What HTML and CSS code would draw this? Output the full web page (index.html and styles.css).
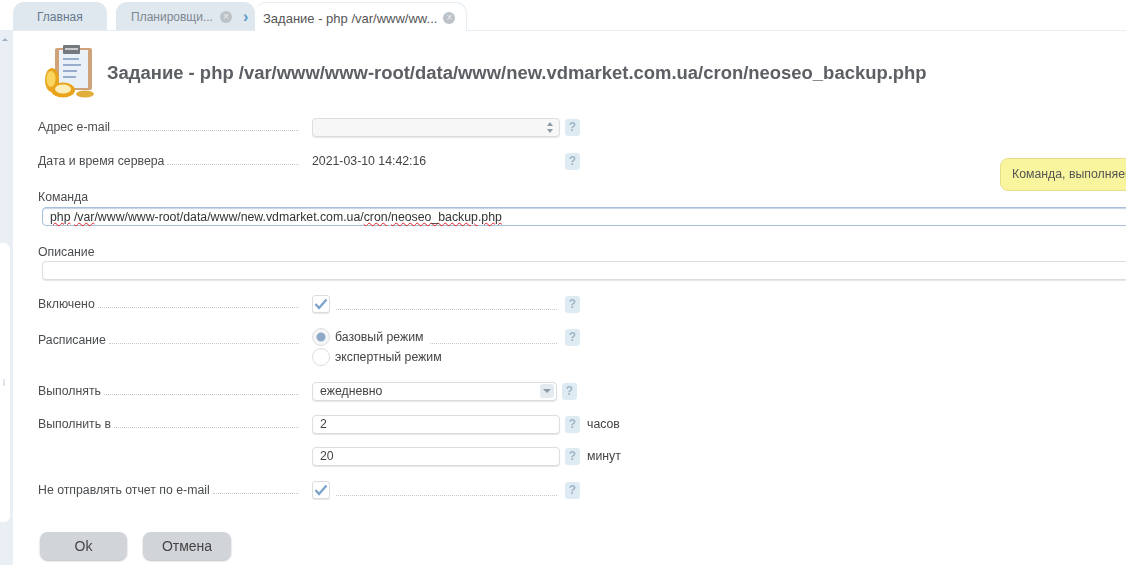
FILE: index.html
```html
<!DOCTYPE html>
<html lang="ru">
<head>
    <meta charset="UTF-8">
    <title>Задание</title>
    <link rel="stylesheet" href="styles.css">
</head>
<body>
    <div class="page">
        <div class="tabs">
            <div class="tab tab-home">Главная</div>
            <div class="tab tab-sched">
                <span>Планировщи...</span>
                <span class="tab-close">×</span>
                <span class="tab-arrow">›</span>
            </div>
            <div class="tab tab-active">
                <span>Задание - php /var/www/ww...</span>
                <span class="tab-close">×</span>
            </div>
        </div>

        <div class="main">
            <div class="side">
                <div class="side-arrow"></div>
                <div class="side-thumb"><span class="side-grip"></span></div>
            </div>

            <div class="content">
                <div class="head">
                    <svg class="head-icon" width="56" height="56" viewBox="0 0 56 56">
                        <rect x="14" y="3" width="37" height="42" rx="2" fill="#cfa27a"/>
                        <rect x="18" y="5" width="29" height="38" fill="#e9f0f8"/>
                        <rect x="22" y="0" width="17" height="9" rx="1" fill="#75787d"/>
                        <rect x="24" y="3" width="13" height="2" fill="#c9ccd0"/>
                        <path d="M22 14h16M22 20h18M22 26h14M22 32h13" stroke="#7f95bd" stroke-width="1.5"/>
                        <ellipse cx="11" cy="35" rx="7" ry="12" fill="#e8a51b"/>
                        <ellipse cx="10" cy="34" rx="4.5" ry="8" fill="#f9d560"/>
                        <ellipse cx="22" cy="45" rx="12" ry="7.5" fill="#e9a41c"/>
                        <ellipse cx="22" cy="44" rx="8" ry="4.5" fill="#fbeeb8"/>
                        <ellipse cx="44" cy="49" rx="9" ry="3.5" fill="#e3ad3a"/>
                    </svg>
                    <h1 class="title">Задание - php /var/www/www-root/data/www/new.vdmarket.com.ua/cron/neoseo_backup.php</h1>
                </div>

                <div class="row row-email">
                    <div class="label"><span>Адрес e-mail</span></div>
                    <div class="field field-gray field-spin">
                        <span class="spin"><i class="spin-up"></i><i class="spin-down"></i></span>
                    </div>
                    <span class="help">?</span>
                </div>

                <div class="row row-date">
                    <div class="label"><span>Дата и время сервера</span></div>
                    <div class="value">2021-03-10 14:42:16</div>
                    <span class="help">?</span>
                </div>

                <div class="wide wide-cmd">
                    <div class="wide-label">Команда</div>
                    <div class="field field-wide field-focus">
                        <span><span class="typo">php</span> <span class="typo">/var</span>/www/www-root/data/www/new.vdmarket.com.ua/<span class="typo">cron</span>/<span class="typo">neoseo_backup</span>.<span class="typo">php</span></span>
                    </div>
                </div>

                <div class="wide wide-desc">
                    <div class="wide-label">Описание</div>
                    <div class="field field-wide"></div>
                </div>

                <div class="row row-on">
                    <div class="label"><span>Включено</span></div>
                    <div class="control">
                        <span class="check">
                            <svg width="14" height="12" viewBox="0 0 14 12"><path d="M1.5 6l3.5 4 7.5-8.5" fill="none" stroke="#7da4cc" stroke-width="2.4"/></svg>
                        </span>
                        <span class="dots"></span>
                    </div>
                    <span class="help">?</span>
                </div>

                <div class="row row-plan">
                    <div class="label"><span>Расписание</span></div>
                    <div class="control control-radios">
                        <div class="radio-line">
                            <span class="radio radio-on"></span>
                            <span class="radio-text">базовый режим</span>
                            <span class="dots"></span>
                        </div>
                        <div class="radio-line">
                            <span class="radio"></span>
                            <span class="radio-text">экспертный режим</span>
                        </div>
                    </div>
                    <span class="help">?</span>
                </div>

                <div class="row row-run">
                    <div class="label"><span>Выполнять</span></div>
                    <div class="field field-select">
                        <span>ежедневно</span>
                        <span class="select-btn"></span>
                    </div>
                    <span class="help">?</span>
                </div>

                <div class="row row-at">
                    <div class="label"><span>Выполнить в</span></div>
                    <div class="field">2</div>
                    <span class="help">?</span>
                    <span class="unit">часов</span>
                </div>

                <div class="row row-min">
                    <div class="label label-empty"></div>
                    <div class="field">20</div>
                    <span class="help">?</span>
                    <span class="unit">минут</span>
                </div>

                <div class="row row-mail">
                    <div class="label"><span>Не отправлять отчет по e-mail</span></div>
                    <div class="control">
                        <span class="check">
                            <svg width="14" height="12" viewBox="0 0 14 12"><path d="M1.5 6l3.5 4 7.5-8.5" fill="none" stroke="#7da4cc" stroke-width="2.4"/></svg>
                        </span>
                        <span class="dots"></span>
                    </div>
                    <span class="help">?</span>
                </div>

                <div class="buttons">
                    <button class="btn btn-ok">Ok</button>
                    <button class="btn btn-cancel">Отмена</button>
                </div>
            </div>
        </div>

        <div class="hint">Команда, выполняемая планировщиком</div>
    </div>
</body>
</html>
```

FILE: styles.css
```css
* {
    box-sizing: border-box;
}

html, body {
    margin: 0;
    height: 565px;
    overflow: hidden;
    background: #fff;
}

body {
    font-family: "Liberation Sans", Arial, sans-serif;
    font-size: 12.3px;
    color: #444;
}

.page {
    position: relative;
    width: 1126px;
    height: 565px;
    overflow: hidden;
    filter: blur(0.7px);
}

/* tabs */
.tabs {
    display: flex;
    align-items: flex-end;
    height: 31px;
    padding-left: 13px;
    border-bottom: 1px solid #e6edf3;
}

.tab {
    display: flex;
    align-items: center;
    height: 28px;
    padding-top: 2px;
    border-radius: 11px 11px 0 0;
    background: #e0e8ef;
    color: #7d8790;
    font-size: 12px;
}

.tab-home {
    width: 94px;
    padding-left: 24px;
    margin-right: 9px;
    color: #66788c;
}

.tab-sched {
    width: 139px;
    padding-left: 15px;
}

.tab-active {
    width: 212px;
    height: 29px;
    margin-bottom: -1px;
    padding-left: 8px;
    background: #fff;
    border: 1px solid #e6edf3;
    border-bottom: 0;
    border-left: 0;
    color: #555;
    font-size: 13px;
}

.tab-close {
    flex: none;
    width: 12px;
    height: 12px;
    margin-left: 6px;
    border-radius: 50%;
    background: #bcc2c7;
    color: #eee;
    font-size: 10px;
    line-height: 12px;
    text-align: center;
}

.tab-sched .tab-close {
    margin-left: 7px;
}

.tab-arrow {
    margin-left: 11px;
    color: #5a9ac8;
    font-size: 16px;
    font-weight: bold;
    line-height: 12px;
}

/* left strip */
.main {
    display: flex;
    height: 534px;
}

.side {
    position: relative;
    flex: 0 0 13px;
    background: #e9eff5;
}

.side-arrow {
    margin: 7px 0 0 2px;
    width: 0;
    height: 0;
    border-left: 3px solid transparent;
    border-right: 3px solid transparent;
    border-bottom: 3px solid #9fb2c4;
}

.side-thumb {
    display: flex;
    align-items: center;
    width: 10px;
    height: 279px;
    margin-top: 202px;
    padding-left: 3px;
    background: #fff;
    border-radius: 0 6px 6px 0;
}

.side-grip {
    width: 2px;
    height: 7px;
    background: #dfe5ea;
}

/* page content */
.content {
    flex: 1;
    min-width: 0;
    padding-left: 25px;
}

.head {
    display: flex;
    align-items: center;
    height: 56px;
    margin-top: 14px;
    margin-left: 3px;
}

.head-icon {
    flex: none;
    margin-right: 10px;
}

.title {
    margin: 0 0 1px;
    color: #5c5f63;
    font-size: 18.45px;
    font-weight: bold;
    white-space: nowrap;
}

.row {
    display: flex;
    align-items: center;
    height: 20px;
}

.label {
    display: flex;
    align-items: baseline;
    flex: none;
    width: 261px;
    margin-right: 13px;
}

.label span {
    white-space: nowrap;
    color: #4a4d50;
}

.label::after {
    content: "";
    flex: 1;
    margin-left: 3px;
    border-bottom: 1px dotted #c8c8c8;
}

.label-empty::after {
    display: none;
}

.value {
    width: 248px;
    color: #444;
}

.field {
    display: flex;
    align-items: center;
    flex: none;
    width: 248px;
    height: 19px;
    padding-left: 7px;
    background: #fff;
    border: 1px solid #ddd;
    border-radius: 4px;
    box-shadow: 0 1px 1px #e6e6e6;
}

.field-gray {
    background: #f7f7f7;
}

.field-spin {
    justify-content: flex-end;
    padding-right: 6px;
}

.spin {
    display: flex;
    flex-direction: column;
    gap: 3px;
}

.spin i {
    width: 0;
    height: 0;
    border-left: 3px solid transparent;
    border-right: 3px solid transparent;
}

.spin-up {
    border-bottom: 4px solid #8b9aa8;
}

.spin-down {
    border-top: 4px solid #8b9aa8;
}

.help {
    flex: none;
    width: 15px;
    height: 17px;
    margin-left: 5px;
    border-radius: 3px;
    background: #dfebf3;
    color: #9db4c6;
    font-size: 12px;
    font-weight: bold;
    line-height: 17px;
    text-align: center;
}

.unit {
    margin-left: 7px;
}

.row-email {
    margin-top: 16px;
}

.row-date {
    margin-top: 14px;
}

.wide-label {
    color: #4a4d50;
    line-height: 12px;
}

.wide-cmd {
    margin-top: 20px;
}

.wide-desc {
    margin-top: 20px;
}

.wide .field {
    width: 1100px;
    margin: 4px 0 0 4px;
}

.wide-desc .field {
    margin-top: 3px;
}

.field-focus {
    padding-left: 7px;
    white-space: pre;
    border-color: #a9c0dc;
    color: #333;
    box-shadow: inset 0 1px 1px #c4d3e4;
}

.typo {
    text-decoration: underline wavy #e8201c 1px;
    text-underline-offset: 1px;
}

.control {
    display: flex;
    align-items: center;
    width: 248px;
}

.check {
    display: flex;
    align-items: center;
    justify-content: center;
    flex: none;
    width: 18px;
    height: 18px;
    background: #fff;
    border: 1px solid #ddd;
    border-radius: 3px;
    box-shadow: 0 1px 1px #e6e6e6;
}

.dots {
    flex: 1;
    align-self: flex-end;
    margin: 0 3px 3px 6px;
    border-bottom: 1px dotted #c8c8c8;
}

.row-on {
    margin-top: 14px;
}

.row-plan {
    align-items: flex-start;
    height: 40px;
    margin-top: 13px;
}

.row-plan .label {
    margin-top: 6px;
}

.row-plan .help {
    margin-top: 2px;
}

.control-radios {
    display: block;
}

.radio-line {
    display: flex;
    align-items: center;
    height: 20px;
}

.radio {
    flex: none;
    width: 18px;
    height: 18px;
    margin-right: 5px;
    background: #fff;
    border: 1px solid #ddd;
    border-radius: 50%;
}

.radio-on {
    background: radial-gradient(circle, #8ea9c6 4px, #f4f6f8 5px);
}

.radio-text {
    white-space: nowrap;
}

.row-run {
    margin-top: 14px;
}

.field-select {
    justify-content: space-between;
    width: 245px;
    padding-right: 2px;
}

.select-btn {
    position: relative;
    width: 14px;
    height: 14px;
    border-radius: 3px;
    background: #e3eaf0;
}

.select-btn::after {
    content: "";
    position: absolute;
    top: 5px;
    left: 3px;
    border-left: 4px solid transparent;
    border-right: 4px solid transparent;
    border-top: 4px solid #8b9aa8;
}

.row-at {
    margin-top: 13px;
}

.row-min {
    margin-top: 12px;
}

.row-mail {
    margin-top: 14px;
}

.buttons {
    display: flex;
    gap: 16px;
    margin: 32px 0 0 2px;
}

.btn {
    width: 87px;
    height: 28px;
    padding: 0;
    background: #d1d5d9;
    border: 0;
    border-radius: 8px;
    box-shadow: 0 1px 2px #bbb;
    color: #444;
    font-family: inherit;
    font-size: 14px;
}

.btn-cancel {
    width: 88px;
}

/* tooltip over the form */
.hint {
    position: absolute;
    top: 158px;
    left: 1000px;
    width: 240px;
    height: 33px;
    padding-left: 11px;
    background: #f8f59e;
    border: 1px solid #e6dc8e;
    border-radius: 8px;
    color: #555;
    line-height: 31px;
    white-space: nowrap;
}
```
